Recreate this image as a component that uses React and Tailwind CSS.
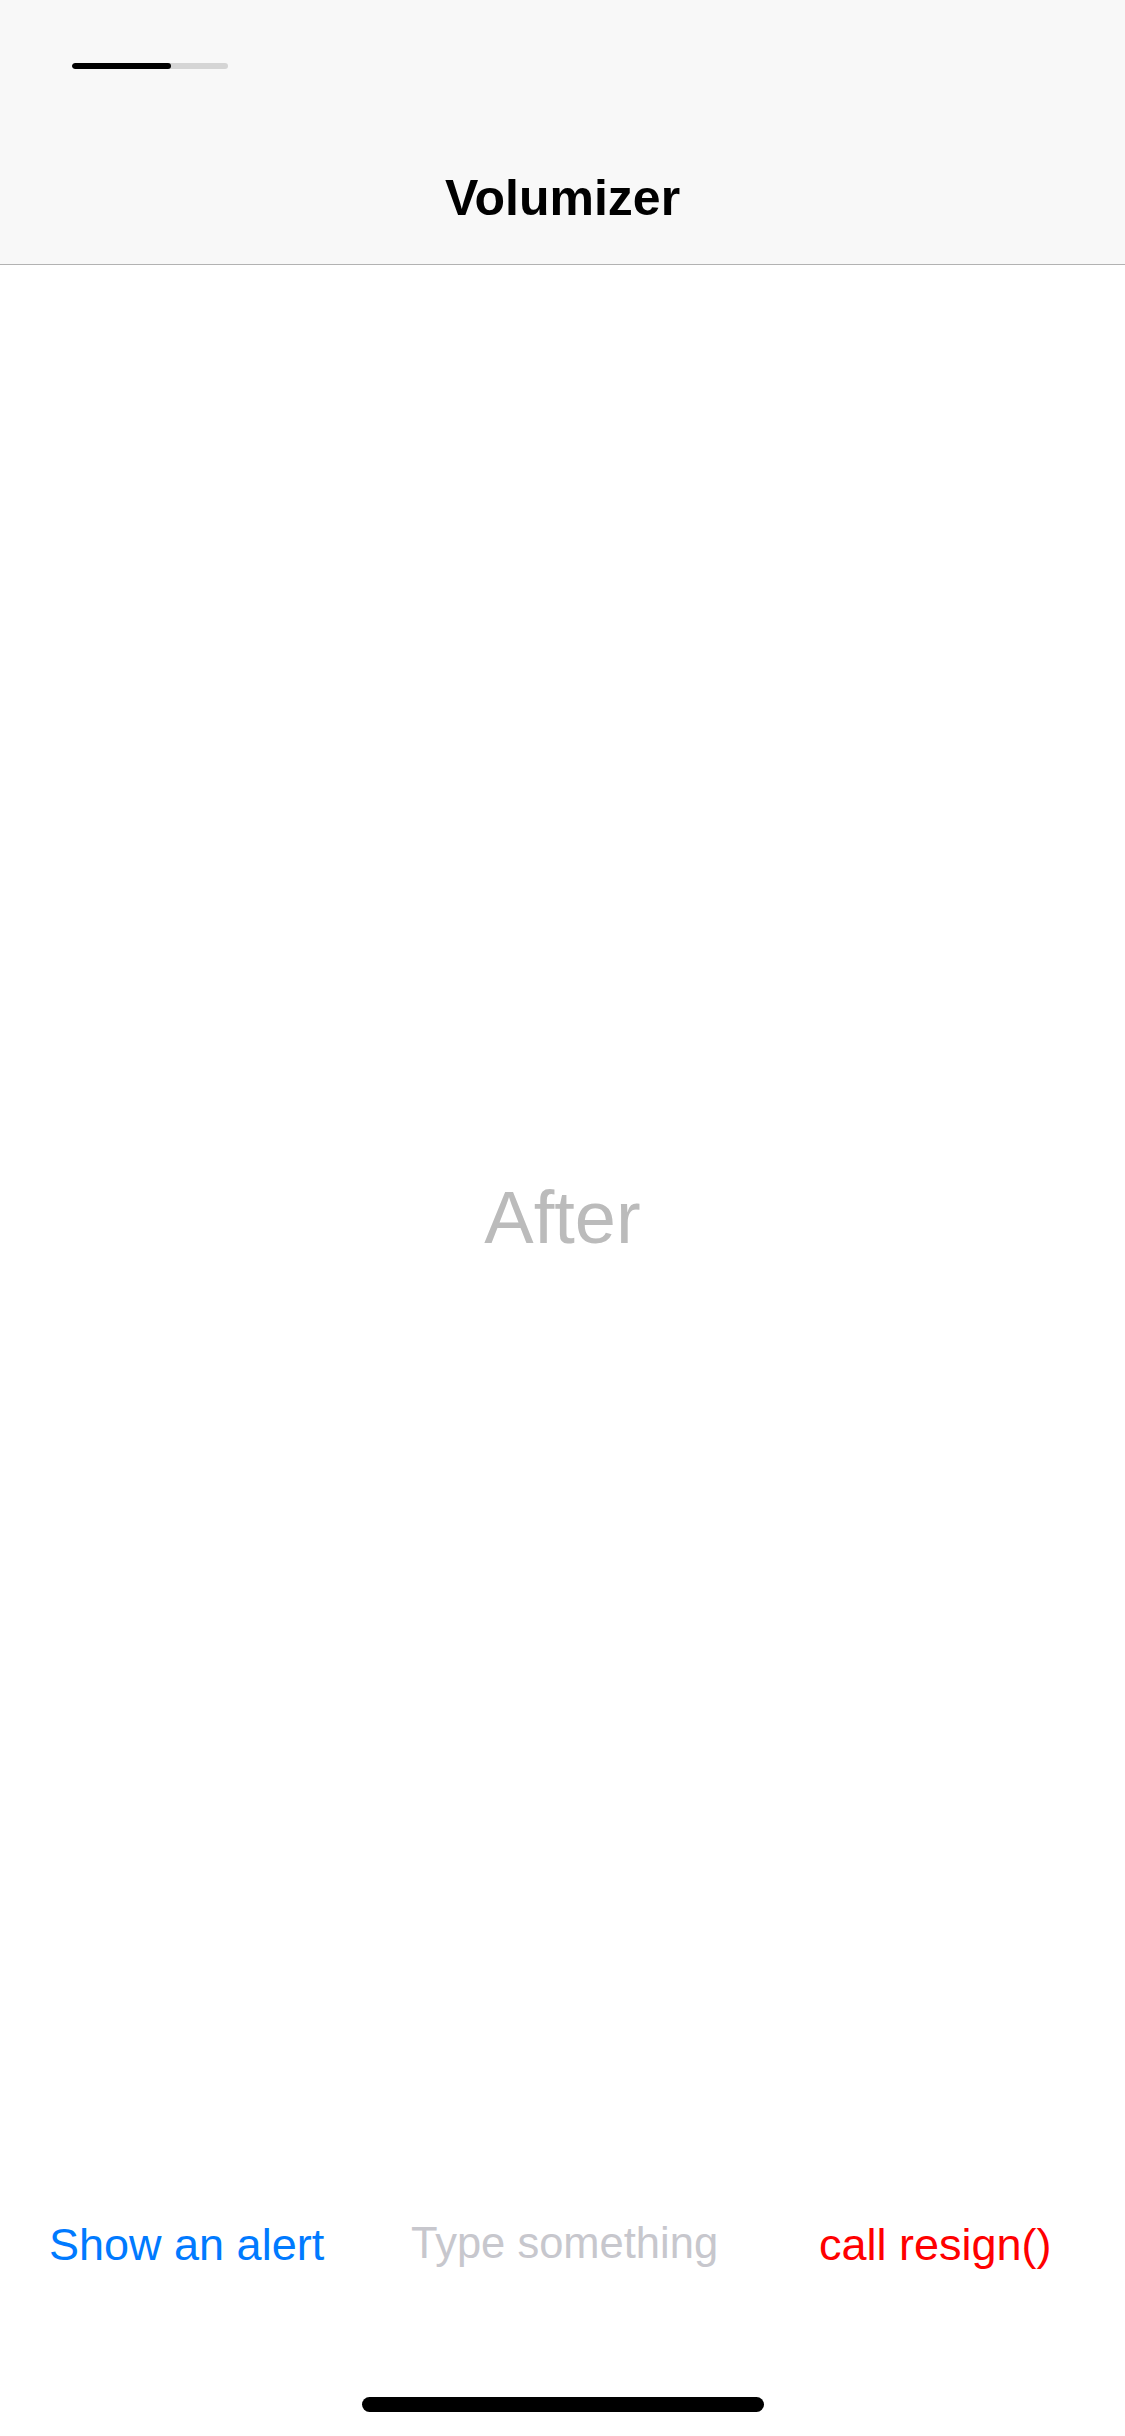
export default function App() {
  return (
    <div className="w-[1125px] h-[2436px] flex flex-col bg-white" style={{ fontFamily: '"Liberation Sans", Arial, sans-serif' }}>
      <header className="h-[265px] shrink-0 bg-[#f8f8f8] border-b border-[#b2b2b2] flex flex-col">
        <div className="h-[132px] pt-[63px] pl-[72px]">
          <div className="w-[156px] h-[6px] rounded-full bg-[#d5d5d5] overflow-hidden flex">
            <div className="w-[99px] h-full bg-black rounded-full" />
          </div>
        </div>
        <div className="h-[132px] flex items-center justify-center">
          <span className="text-[50px] font-bold text-black leading-none">Volumizer</span>
        </div>
      </header>
      <main className="flex-1 flex items-center justify-center">
        <span className="text-[74px] text-[#bbbbbb] leading-none">After</span>
      </main>
      <div className="h-[266px] shrink-0 flex flex-col">
        <div className="h-[148px] flex items-center pl-[49px]">
          <span className="text-[45px] text-[#007aff] leading-none w-[362px]">Show an alert</span>
          <span className="text-[43.5px] text-[#c7c7cd] leading-none w-[408px]">Type something</span>
          <span className="text-[45px] text-[#ff0000] leading-none">call resign()</span>
        </div>
        <div className="flex-1 flex items-end justify-center pb-[24px]">
          <div className="w-[402px] h-[15px] rounded-full bg-black" />
        </div>
      </div>
    </div>
  );
}
